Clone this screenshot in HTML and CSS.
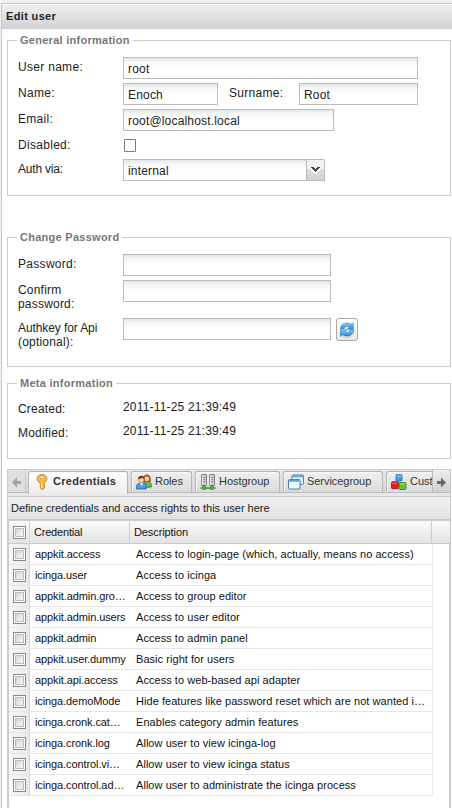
FILE: index.html
```html
<!DOCTYPE html>
<html lang="en">
<head>
<meta charset="utf-8">
<title>Edit user</title>
<link rel="stylesheet" href="styles.css">
</head>
<body>
<main class="window">
  <header class="window-title">Edit user</header>
  <form class="window-body">
    <fieldset class="group general">
      <legend>General information</legend>
      <div class="row"><label>User name:</label><input class="field w-full" type="text" value="root"></div>
      <div class="row"><label>Name:</label><input class="field w-name" type="text" value="Enoch"><label class="surname">Surname:</label><input class="field w-surname" type="text" value="Root"></div>
      <div class="row"><label>Email:</label><input class="field w-email" type="text" value="root@localhost.local"></div>
      <div class="row short"><label>Disabled:</label><span class="checkbox"></span></div>
      <div class="row"><label class="auth">Auth via:</label><div class="combo"><input class="field w-combo" type="text" value="internal"><span class="trigger"><svg width="17" height="20" viewBox="0 0 17 20"><path d="M4 9h2v1h1v1h3v-1h1V9h2v2h-1v1h-1v1h-1v1H7v-1H6v-1H5v-1H4z" fill="#fff"/><path d="M4 7h3v1h1v1h1V8h1V7h3v1h-1v1h-1v1h-1v1H9v1H8v-1H7v-1H6V9H5V8H4z" fill="#484848"/></svg></span></div></div>
    </fieldset>
    <fieldset class="group password">
      <legend>Change Password</legend>
      <div class="row"><label>Password:</label><input class="field w-pass" type="text"></div>
      <div class="row tall"><label class="confirm">Confirm<br>password:</label><input class="field w-pass" type="text"></div>
      <div class="row tall"><label class="authkey"><span>Authkey for Api</span><br>(optional):</label><input class="field w-pass" type="text">
        <span class="refresh"><svg width="16" height="16" viewBox="0 0 16 16"><defs><linearGradient id="blue" x2="0" y2="1"><stop stop-color="#8fd0f5"/><stop offset="1" stop-color="#1c86d8"/></linearGradient></defs><path d="M3 15h10" stroke="#ccc" stroke-width="1"/><path d="M1.300 7C1.500 3 4.500 1 8 1c1.800 0 3.200.5 4.200 1.300L14.500.8v6.400H8l2.200-2.100C8 3.900 5.800 4.500 5 7z" fill="url(#blue)" stroke="#3c9be0" stroke-width=".6"/><path d="M14.700 8c-.2 4-3.200 6-6.700 6-1.800 0-3.200-.5-4.200-1.300L1.500 14.200V7.800H8L5.800 9.900C8 11.100 10.200 10.500 11 8z" fill="url(#blue)" stroke="#1c78c8" stroke-width=".6"/></svg></span></div>
    </fieldset>
    <fieldset class="group meta">
      <legend>Meta information</legend>
      <div class="row short"><label>Created:</label><output>2011-11-25 21:39:49</output></div>
      <div class="row short"><label>Modified:</label><output>2011-11-25 21:39:49</output></div>
    </fieldset>
    <section class="tabs">
      <nav class="tabstrip">
        <span class="scroller left"><svg width="18" height="22" viewBox="0 0 18 22"><path d="M4 12.500l5-5v3.500h4v3H9v3.500z" fill="#a2a2a2"/></svg></span>
        <span class="tab active"><svg width="16" height="16" viewBox="0 0 16 16"><path d="M8 .6c2.800 0 4.900 1.800 4.900 4.200 0 1.900-1.200 3.300-2.900 4l-.1 1.200 1.100 1-1.100 1 1 1.100-1.200 1.700L8 15.500l-1.700-1.400V8.900C4.300 8.200 3.100 6.700 3.100 4.800 3.100 2.400 5.200.6 8 .6z" fill="#f2bd47" stroke="#b98220" stroke-width=".9"/><ellipse cx="8" cy="3.300" rx="2" ry="1.300" fill="#fff" stroke="#b98220" stroke-width=".6"/><path d="M7.500 8v6" stroke="#ffe9a6" stroke-width="1"/></svg><span>Credentials</span></span>
        <span class="tab roles"><svg width="16" height="16" viewBox="0 0 16 16"><path d="M7 8.500C7 1.500 8.500.5 10.800.5s4 1.500 4 5.500v2z" fill="#a4582c"/><path d="M8 14V10.500C8 8.500 9.200 7.700 11 7.700c2.800 0 4.500 1.100 4.500 3V13z" fill="#65b94b" stroke="#388329" stroke-width=".7"/><circle cx="10.800" cy="4.800" r="2.400" fill="#ffd2ac"/><path d="M.6 15v-2.800C.6 10 2.300 9 5.500 9c3 0 4.600 1 4.600 3.200V15z" fill="#4d9be1" stroke="#22609f" stroke-width=".8"/><path d="M4 9l1.500 3L7 9z" fill="#fff"/><ellipse cx="5.300" cy="5.700" rx="2.700" ry="3" fill="#ffd1aa" stroke="#86512d" stroke-width=".5"/><path d="M2.300 5.500C2 2.700 3.300 1.700 5.500 1.700s3.300 1.300 3 3.800C7.600 5 7.200 4.500 7 4c-1.500.7-3.500.4-4.700 1.500z" fill="#6d3a20"/></svg><span>Roles</span></span>
        <span class="tab host"><svg width="16" height="16" viewBox="0 0 16 16"><path d="M1.500.5h5v11h-5zM9.500.5h5v11h-5z" fill="#cacaca" stroke="#8a8a8a"/><path d="M2.500 3.500h3m-3 2h3m-3 2h3m5-4h3m-3 2h3m-3 2h3" stroke="#999"/><path d="M2.500 1.500v9m8-9v9" stroke="#eee"/><path d="M4 11.500V14m8-2.500V14" stroke="#555" stroke-width="2"/><path d="M.5 14h15" stroke="#26922b" stroke-width="1.500"/><path d="M2.500 12.500h3v3h-3zm8 0h3v3h-3z" fill="#37d13e" stroke="#168a1d" stroke-width=".6"/><path d="M6.500 14h3" stroke="#777"/></svg><span>Hostgroup</span></span>
        <span class="tab service"><svg width="16" height="16" viewBox="0 0 16 16"><rect x="4" y="1" width="11.500" height="9.500" rx="1" fill="#eaf3fb" stroke="#3f7fbd"/><path d="M4.500 2.300h10.500" stroke="#5ba4e2" stroke-width="2"/><rect x=".5" y="5.500" width="11.500" height="9.500" rx="1" fill="#f8fbfe" stroke="#3f7fbd"/><path d="M1 6.800h10.500" stroke="#5ba4e2" stroke-width="2"/></svg><span>Servicegroup</span></span>
        <span class="tab custom"><svg width="16" height="16" viewBox="0 0 16 16"><rect x="5" y=".6" width="6" height="6.500" rx="1" fill="#3ba5df" stroke="#1876ad" stroke-width=".8"/><path d="M5.500 2h5" stroke="#8ad5f6"/><rect x=".5" y="7.700" width="7" height="7" rx="1" fill="#e31d28" stroke="#9c0a17" stroke-width=".8"/><path d="M1.200 9.200h5" stroke="#f76b70"/><rect x="8" y="8.500" width="7" height="7" rx="1" fill="#69bd31" stroke="#37831a" stroke-width=".8"/><path d="M8.700 10h5" stroke="#aee677"/></svg><span>Cust</span></span>
        <span class="scroller right"><svg width="18" height="22" viewBox="0 0 18 22"><path d="M13 12.500l-5-5v3.500h-4v3h4v3.500z" fill="#666"/></svg></span>
      </nav>
      <div class="toolbar"><span>Define credentials and access rights to this user here</span></div>
      <div class="grid">
        <div class="grid-row head"><span class="check"><i></i></span><span class="name">Credential</span><span class="desc">Description</span></div>
        <div class="grid-row"><span class="check"><i></i></span><span class="name">appkit.access</span><span class="desc">Access to login-page (which, actually, means no access)</span></div>
        <div class="grid-row"><span class="check"><i></i></span><span class="name">icinga.user</span><span class="desc">Access to icinga</span></div>
        <div class="grid-row"><span class="check"><i></i></span><span class="name">appkit.admin.gro…</span><span class="desc">Access to group editor</span></div>
        <div class="grid-row"><span class="check"><i></i></span><span class="name">appkit.admin.users</span><span class="desc">Access to user editor</span></div>
        <div class="grid-row"><span class="check"><i></i></span><span class="name">appkit.admin</span><span class="desc">Access to admin panel</span></div>
        <div class="grid-row"><span class="check"><i></i></span><span class="name">appkit.user.dummy</span><span class="desc">Basic right for users</span></div>
        <div class="grid-row"><span class="check"><i></i></span><span class="name">appkit.api.access</span><span class="desc">Access to web-based api adapter</span></div>
        <div class="grid-row"><span class="check"><i></i></span><span class="name">icinga.demoMode</span><span class="desc">Hide features like password reset which are not wanted i…</span></div>
        <div class="grid-row"><span class="check"><i></i></span><span class="name">icinga.cronk.cat…</span><span class="desc">Enables category admin features</span></div>
        <div class="grid-row"><span class="check"><i></i></span><span class="name">icinga.cronk.log</span><span class="desc">Allow user to view icinga-log</span></div>
        <div class="grid-row"><span class="check"><i></i></span><span class="name">icinga.control.vi…</span><span class="desc">Allow user to view icinga status</span></div>
        <div class="grid-row"><span class="check"><i></i></span><span class="name">icinga.control.ad…</span><span class="desc">Allow user to administrate the icinga process</span></div>
      </div>
    </section>
  </form>
</main>
</body>
</html>
```
FILE: styles.css
```css
* { box-sizing: border-box; }
html, body { margin: 0; height: 808px; overflow: hidden; }
body {
  padding: 3px 0 0 1px;
  background: #f0f0f0;
  font-family: "Liberation Sans", Arial, sans-serif;
  font-size: 11px;
  color: #222;
}
.window { height: 805px; border: 1px solid #c9c9c9; border-width: 1px 0 0 1px; background: #fff; }
.window-title {
  height: 25px;
  padding: 0 4px;
  border-top: 1px solid #fafafa;
  border-bottom: 1px solid #d0d0d0;
  background: linear-gradient(#f0f0f0, #d2d2d2);
  font-weight: bold;
  line-height: 22px;
  letter-spacing: .35px;
}
.window-body { display: flex; flex-direction: column; padding: 6px 1px 0 5px; }
.group {
  min-width: 0;
  margin: 0;
  padding: 0 0 0 10px;
  border: 1px solid #ccc;
  font-size: 12px;
}
.group legend {
  height: 11px;
  margin-left: -1px;
  padding: 0 3px;
  color: #777;
  font-size: 11px;
  font-weight: bold;
  line-height: 11px;
  letter-spacing: .27px;
}
.general { height: 161px; }
.password { height: 135px; margin-top: 36px; }
.meta { height: 81px; margin-top: 11px; }
.general .row:first-of-type { margin-top: 11px; }
.password .row:first-of-type { margin-top: 11px; }
.meta .row:first-of-type { margin-top: 10px; }
.row { display: flex; align-items: flex-start; height: 26px; }
.row.short { height: 24px; }
.row.tall { height: 38px; }
.row label { flex: none; width: 105px; padding-top: 3px; line-height: 14px; letter-spacing: .3px; }
.row label.surname { width: 81px; padding-left: 11px; }
.row label.auth { letter-spacing: -.2px; }
.row label.confirm, .row label.authkey, .meta .row label { letter-spacing: .2px; }
.authkey span { letter-spacing: -.1px; }
.field {
  flex: none;
  height: 22px;
  margin: 0;
  padding: 2px 4px 0;
  border: 1px solid #bbb;
  border-radius: 0;
  background: linear-gradient(#e2e7e9, #f5f7f8 4px, #fff 10px);
  color: #222;
  font: 12px "Liberation Sans", Arial, sans-serif;
  letter-spacing: .18px;
}
.w-full { width: 295px; }
.w-name { width: 95px; }
.w-surname { width: 119px; }
.w-email { width: 211px; }
.w-pass { width: 208px; }
.w-combo { width: 184px; }
.checkbox { width: 12px; height: 13px; margin: 4px 0 0 1px; border: 1px solid #777; border-radius: 1px; }
.combo { display: flex; }
.trigger {
  width: 18px;
  height: 22px;
  border: 1px solid #bbb;
  border-left: 0;
  border-radius: 0 2px 0 0;
  background: linear-gradient(#f2f2f2 45%, #ddd 46%, #d2d2d2);
}
.trigger svg { display: block; }
.refresh {
  display: flex;
  width: 22px;
  height: 23px;
  margin-left: 5px;
  padding: 3px 2px;
  border: 1px solid #aaa;
  border-radius: 3px;
  background: linear-gradient(#fff, #e9e9e9);
}
.meta output { padding-top: 1px; line-height: 14px; letter-spacing: .18px; }
.tabs { height: 339px; margin-top: 10px; border: 1px solid #ccc; border-width: 1px 1px 0; background: #e8e8e8; }
.tabstrip { display: flex; height: 23px; border-bottom: 1px solid #bbb; background: linear-gradient(#e6e6e6, #d8d8d8); }
.scroller { flex: none; width: 18px; height: 22px; background: #dfdfdf; }
.scroller.left { border-right: 1px solid #c8c8c8; }
.scroller.right { border-left: 1px solid #bbb; background: linear-gradient(#eee, #d0d0d0); }
.scroller svg { display: block; }
.tab {
  display: flex;
  flex: none;
  height: 21px;
  margin: 1px 0 0 3px;
  padding: 1px 0 0 4px;
  border: 1px solid #b5b5b5;
  border-bottom: 0;
  border-radius: 3px 3px 0 0;
  background: linear-gradient(#f0f0f0, #dadada);
  box-shadow: inset 1px 1px #f8f8f8;
  color: #333;
  line-height: 17px;
  letter-spacing: -.05px;
  white-space: nowrap;
}
.tab svg { flex: none; width: 16px; height: 16px; margin: 1px 3px 0 0; }
.tab.active { width: 100px; height: 23px; margin-left: 2px; padding-left: 5px; background: linear-gradient(#fff, #ececec); font-weight: bold; letter-spacing: .3px; }
.tab.roles { width: 61px; }
.tab.host { width: 85px; }
.tab.service { width: 100px; }
.tab.custom { width: 46px; overflow: hidden; border-right: 0; border-radius: 3px 0 0; }
.toolbar {
  height: 24px;
  margin-top: 3px;
  padding: 0 0 0 3px;
  border: 1px solid #c5c5c5;
  border-width: 1px 0;
  background: linear-gradient(#f0f0f0, #e2e2e2);
  line-height: 22px;
}
.grid { height: 288px; border: 1px solid #ccc; border-bottom: 0; background: #fff; }
.grid-row { display: flex; width: 424px; height: 21px; border-bottom: 1px solid #e6e6e6; border-right: 1px solid #ededed; line-height: 20px; white-space: nowrap; color: #111; }
.check { display: flex; flex: none; width: 21px; padding: 4px 0 0 4px; border-right: 1px solid #d4d4d4; background: linear-gradient(90deg, #f8f8f8, #e9e9e9); }
.check i { width: 13px; height: 13px; border: 1px solid #888; background: linear-gradient(135deg, #c8ccd2, #fff); box-shadow: inset 0 0 0 1px #fff, inset 0 0 0 2px #bbb; }
.name { flex: none; width: 100px; padding-left: 5px; letter-spacing: -.1px; }
.desc { padding-left: 6px; letter-spacing: .05px; }
.grid-row.head { width: 441px; height: 23px; border-right: 0; border-bottom-color: #c9c9c9; background: linear-gradient(#fafafa, #e3e3e3); line-height: 23px; }
.head .check { padding-top: 5px; background: none; }
.head .name { padding-left: 4px; border-right: 1px solid #ccc; letter-spacing: -.2px; }
.head .desc { width: 302px; padding-left: 4px; border-right: 1px solid #ccc; letter-spacing: -.1px; }
```
